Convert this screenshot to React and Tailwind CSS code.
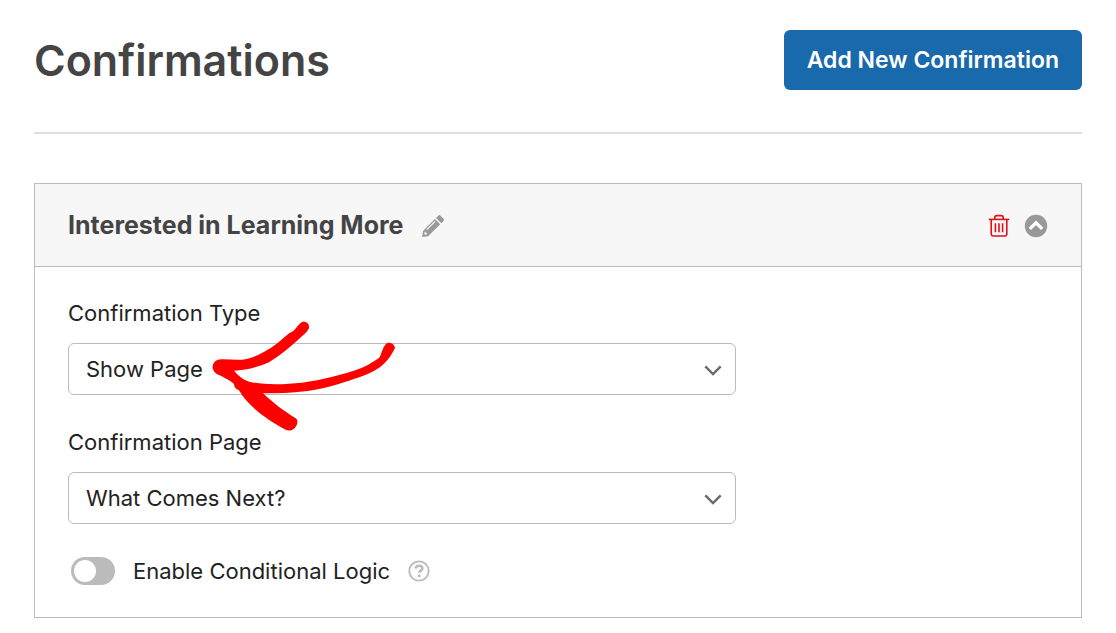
import { useState } from "react";

function PencilIcon() {
    return (
        <svg viewBox="0 0 24 24" className="size-6" fill="#999999" aria-hidden="true">
            <path d="M17.2 1.7a1.6 1.6 0 0 1 2.3 0l3 3a1.6 1.6 0 0 1 0 2.3l-2.2 2.2-5.3-5.3z" />
            <path fillRule="evenodd" d="M13.9 5l5.3 5.3L7.1 22.2l-5.9.7.8-5.9zM13.6 7.1L5.4 15.3l.8.8 8.2-8.2zM3.6 18.1l-.3 2.6 2.6-.4v-1.5H4.5v-1.4z" />
        </svg>
    )
}

function TrashIcon() {
    return (
        <svg viewBox="0 0 22 24" className="h-6 w-[22px]" fill="none" stroke="#e01018" strokeWidth="1.6" aria-hidden="true">
            <path d="M.8 5.4h20.4" />
            <path d="M6.8 5V3.6a2 2 0 0 1 2-2h4.4a2 2 0 0 1 2 2V5" />
            <path d="M3.2 5.4V20a2 2 0 0 0 2 2h11.6a2 2 0 0 0 2-2V5.4" />
            <path d="M7.4 9.3v9M11 9.3v9M14.6 9.3v9" />
        </svg>
    )
}

function CollapseIcon({ open }) {
    return (
        <svg viewBox="0 0 24 24" className={open ? "size-6" : "size-6 rotate-180"} aria-hidden="true">
            <circle cx="12" cy="12" r="11.2" fill="#999999" />
            <path d="M5.8 14.8L12 8.8l6.2 6" fill="none" stroke="#ffffff" strokeWidth="3.2" />
        </svg>
    )
}

function Arrow() {
    return (
        <svg viewBox="0 0 630 390" className="pointer-events-none absolute -top-[33px] left-[132px] h-[130px] w-[210px]" fill="#ff0000" aria-hidden="true">
            <path d="M38 174C37 158 48 148 64 148C90 147 115 153 143 146C172 139 200 123 229 102C247 88 263 70 281 62C289 54 297 42 306 36C318 32 329 41 327 54C321 68 307 77 297 87C270 111 242 136 207 157C174 171 139 181 102 182C113 195 127 208 148 215C195 226 254 223 306 218C366 210 431 194 484 174C506 165 521 154 532 147C541 143 540 138 543 132C548 119 552 105 562 99C573 96 583 103 585 114C576 132 567 147 551 162C522 189 478 202 432 217C377 236 316 247 253 249C231 250 210 250 189 250C216 276 252 304 287 325C295 331 293 344 285 353C278 361 268 364 257 359C210 334 145 291 117 241C107 237 102 231 102 222C92 212 78 206 64 198C48 193 40 185 38 174Z" />
        </svg>
    )
}

function SelectField({ id, label, options, children }) {
    const [value, setValue] = useState(options[0])

    return (
        <div className="w-full max-w-[668px]">
            <label htmlFor={id} className="mb-3.5 block text-[22px] leading-8">{label}</label>
            <div className="relative">
                <select
                    id={id}
                    value={value}
                    onChange={(e) => setValue(e.target.value)}
                    className="block h-[52px] w-full appearance-none rounded-md border border-[#bbbbbb] bg-white pr-12 pl-[17px] text-[22px]"
                >
                    {options.map((option) => (
                        <option key={option}>{option}</option>
                    ))}
                </select>
                <svg viewBox="0 0 18 12" className="pointer-events-none absolute top-[21px] right-3.5 h-3 w-[18px]" aria-hidden="true">
                    <path d="M1.3 2.3L9 10l7.7-7.7" fill="none" stroke="#6b6b6b" strokeWidth="2.4" />
                </svg>
                {children}
            </div>
        </div>
    )
}

export default function App() {
    const [open, setOpen] = useState(true)
    const [conditional, setConditional] = useState(false)

    return (
        <main className="min-h-screen bg-white px-[34px] pt-[30px] pb-4 font-['Inter',sans-serif] text-[#222222]">
            <header className="flex items-center justify-between border-b-2 border-[#dfdfdf] pb-[42px]">
                <h1 className="text-[43px] leading-[60px] font-semibold text-[#444444]">Confirmations</h1>
                <button type="button" className="h-[60px] rounded-md bg-[#186aad] px-[23px] text-[23px] font-semibold text-white">
                    Add New Confirmation
                </button>
            </header>

            <section className="mt-[49px] border border-[#bbbbbb]">
                <div className="flex h-[83px] items-center justify-between border-b border-[#bbbbbb] bg-[#f7f7f7] px-[33px] pt-px">
                    <div className="flex items-center gap-[18px]">
                        <h2 className="text-[25px] font-bold text-[#444444]">Interested in Learning More</h2>
                        <button type="button" aria-label="Edit name">
                            <PencilIcon />
                        </button>
                    </div>
                    <div className="flex items-center gap-3.5">
                        <button type="button" aria-label="Delete confirmation">
                            <TrashIcon />
                        </button>
                        <button type="button" aria-label="Toggle confirmation" onClick={() => setOpen(!open)}>
                            <CollapseIcon open={open} />
                        </button>
                    </div>
                </div>

                {open && (
                    <div className="flex flex-col gap-[31px] px-[33px] py-[30px]">
                        <SelectField id="confirmation-type" label="Confirmation Type" options={['Show Page', 'Message', 'Go to URL']}>
                            <Arrow />
                        </SelectField>
                        <SelectField id="confirmation-page" label="Confirmation Page" options={['What Comes Next?']} />
                        <div className="flex items-center gap-[18px]">
                            <label className="flex items-center gap-[18px] pl-[3px] text-[22px] leading-8">
                                <input
                                    type="checkbox"
                                    role="switch"
                                    checked={conditional}
                                    onChange={(e) => setConditional(e.target.checked)}
                                    className="h-7 w-11 appearance-none rounded-full bg-[#bbbbbb] p-[3px] before:block before:size-[22px] before:rounded-full before:bg-white checked:bg-[#186aad] checked:before:translate-x-4"
                                />
                                Enable Conditional Logic
                            </label>
                            <button type="button" aria-label="Help">
                                <svg viewBox="0 0 22 22" className="size-[22px]" fill="none" stroke="#bbbbbb" aria-hidden="true">
                                    <circle cx="11" cy="11" r="9.7" strokeWidth="1.8" />
                                    <path d="M7.6 8.6C8 6.6 9.3 5.8 11.1 5.8c1.8 0 3.2 1 3.2 2.6 0 2.3-3.1 2.1-3.1 4.4" strokeWidth="2.6" />
                                    <circle cx="11.2" cy="15.7" r="1.5" fill="#bbbbbb" stroke="none" />
                                </svg>
                            </button>
                        </div>
                    </div>
                )}
            </section>
        </main>
    )
}
